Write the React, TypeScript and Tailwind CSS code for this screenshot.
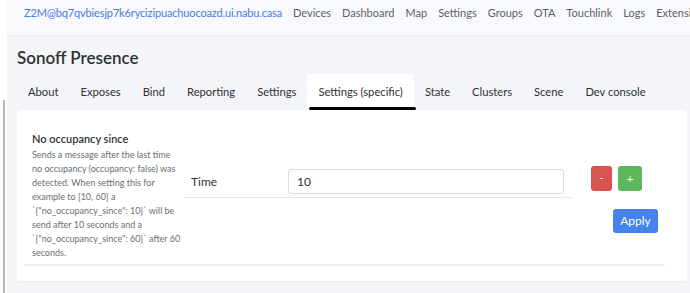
import React from 'react';

const navLinks = ['Devices', 'Dashboard', 'Map', 'Settings', 'Groups', 'OTA', 'Touchlink', 'Logs', 'Extensions'];
const tabs = ['About', 'Exposes', 'Bind', 'Reporting', 'Settings', 'Settings (specific)', 'State', 'Clusters', 'Scene', 'Dev console'];

const descLines = [
  'Sends a message after the last time',
  'no occupancy (occupancy: false) was',
  'detected. When setting this for',
  'example to [10, 60] a',
  '`{"no_occupancy_since": 10}` will be',
  'send after 10 seconds and a',
  '`{"no_occupancy_since": 60}` after 60',
  'seconds.',
];

export default function App() {
  const active = 'Settings (specific)';

  return (
    <div className="flex w-[690px] h-[293px] overflow-hidden bg-[#f4f5f8] font-['Lato',sans-serif]">
      {/* Left edge strip */}
      <div className="w-[7px] shrink-0 bg-white flex">
        <div className="ml-[3px] mt-[100px] w-[2px] bg-[#b8b8b8]" />
      </div>

      <div className="flex-1 flex flex-col min-w-0">
        {/* Top navbar */}
        <nav className="h-[36px] shrink-0 bg-[#f8f9fc] border-b border-[#eceef3] flex items-start pt-[5px] pl-[17px] gap-[11px] whitespace-nowrap text-[11px] overflow-hidden">
          <span className="text-[#4a7be0] tracking-[-0.15px]">Z2M@bq7qvbiesjp7k6rycizipuachuocoazd.ui.nabu.casa</span>
          {navLinks.map(link => (
            <span key={link} className="text-[#5c5f66]">{link}</span>
          ))}
        </nav>

        <main className="flex-1 pl-[10px] pt-[9px]">
          <h1 className="text-[17px] font-semibold text-[#2f3236] leading-[26px]">Sonoff Presence</h1>

          {/* Tabs */}
          <div className="flex mt-[3px] h-[36px] whitespace-nowrap">
            {tabs.map(tab => (
              <div
                key={tab}
                className={`relative px-[11px] flex items-center text-[11.2px] text-[#2f3236] ${
                  tab === active ? 'bg-white rounded-t-[3px]' : ''
                }`}
              >
                {tab}
                {tab === active && (
                  <div className="absolute left-[2px] right-[-2px] bottom-0 h-[3px] rounded-full bg-black" />
                )}
              </div>
            ))}
          </div>

          {/* Card */}
          <div className="bg-white w-[670px] h-[171px] rounded-[3px] shadow-[0_1px_2px_rgba(0,0,0,0.04)] px-[7px] pt-[22px]">
            <div className="flex h-[134px] border-b-2 border-[#eef0f3] w-[641px]">
              {/* Description */}
              <div className="w-[152px] pl-[8px] whitespace-nowrap">
                <div className="text-[11px] font-semibold text-[#2f3236] leading-[14px]">No occupancy since</div>
                <div className="text-[9px] text-[#6b6e73] leading-[14px] mt-[2px]">
                  {descLines.map(line => (
                    <div key={line}>{line}</div>
                  ))}
                </div>
              </div>

              {/* Field */}
              <div className="flex-1 flex items-start pt-[34px] pl-[8px]">
                <div className="w-[388px] h-[32px] flex items-center border-b border-[#e5e7eb] pl-[7px]">
                  <span className="w-[97px] text-[12px] text-[#2f3236]">Time</span>
                  <div className="w-[276px] h-[25px] border border-[#d9dce1] rounded-[3px] flex items-center pl-[8px] text-[12px] text-[#2f3236]">
                    10
                  </div>
                </div>
              </div>

              {/* Actions */}
              <div className="w-[74px] pt-[34px] flex flex-col items-end">
                <div className="flex gap-[6px] self-start">
                  <button className="w-[21px] h-[25px] rounded-[3px] bg-[#d9534f] text-white text-[11px] flex items-center justify-center">-</button>
                  <button className="w-[24px] h-[25px] rounded-[3px] bg-[#5cb85c] text-white text-[12px] flex items-center justify-center">+</button>
                </div>
                <button className="mt-[18px] mr-[7px] w-[45px] h-[24px] rounded-[3px] bg-[#4582ec] text-white text-[12px] flex items-center justify-center">Apply</button>
              </div>
            </div>
          </div>
        </main>
      </div>
    </div>
  );
}
